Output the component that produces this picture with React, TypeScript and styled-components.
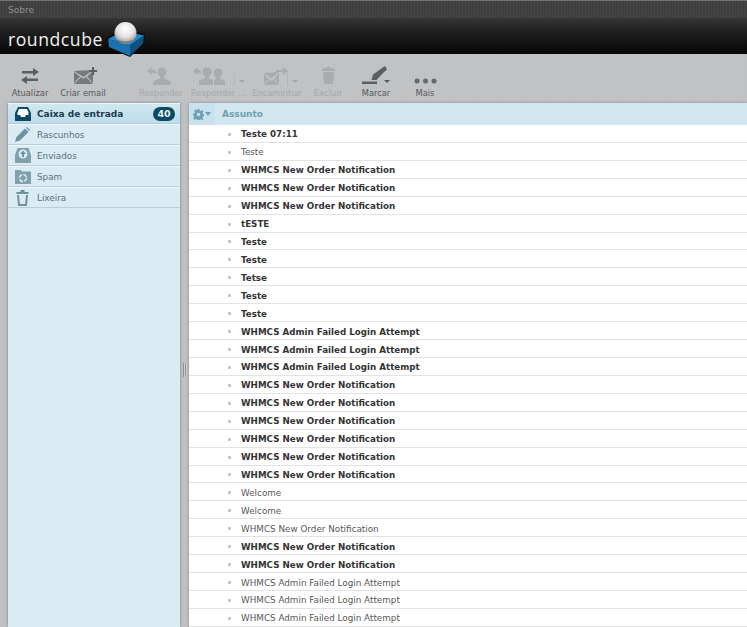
import React from 'react';
import styled, { createGlobalStyle } from 'styled-components';

const GlobalStyle = createGlobalStyle`
  html, body {
    margin: 0;
    padding: 0;
    height: 100%;
    overflow: hidden;
    background: #bfc1c3;
    font-family: "DejaVu Sans", Verdana, sans-serif;
  }
  #root { height: 100%; }
`;

const Page = styled.div`
  width: 747px;
  height: 627px;
  display: flex;
  flex-direction: column;
  overflow: hidden;
`;

const TopLine = styled.div`
  height: 18px;
  flex-shrink: 0;
  padding: 1px 0 0 8px;
  display: flex;
  align-items: center;
  font-size: 9px;
  color: #8f8f8f;
  background-color: #3f3f3f;
  background-image: repeating-linear-gradient(90deg, rgba(255, 255, 255, 0.03) 0 1px, transparent 1px 3px);
  border-top: 1px solid #6f7276;
  box-sizing: border-box;
`;

const Header = styled.div`
  height: 36px;
  flex-shrink: 0;
  display: flex;
  align-items: center;
  padding-left: 8px;
  position: relative;
  z-index: 1;
  background: linear-gradient(180deg, #353535 0%, #1c1c1c 45%, #060606 100%);
`;

const LogoText = styled.span`
  font-family: "Open Sans", "Lato", sans-serif;
  font-size: 17.6px;
  font-weight: 400;
  color: #f0f0f0;
  letter-spacing: 0.55px;
  width: 98px;
  margin-top: 5px;
`;

const Toolbar = styled.div`
  height: 49px;
  flex-shrink: 0;
  display: flex;
  align-items: flex-start;
  background-color: #bfc1c3;
  background-image: repeating-linear-gradient(90deg, rgba(255, 255, 255, 0.05) 0 1px, transparent 1px 3px);
`;

const ToolButton = styled.div<{ $w: number; $off?: boolean }>`
  width: ${p => p.$w}px;
  flex-shrink: 0;
  height: 44px;
  display: flex;
  flex-direction: column;
  align-items: center;
  position: relative;
  color: ${p => (p.$off ? '#a6a8aa' : '#56595b')};
  font-size: 8.3px;
  white-space: nowrap;
`;

const ToolIcon = styled.div<{ $shift?: number }>`
  height: 24px;
  margin-top: 11px;
  display: flex;
  align-items: center;
  justify-content: center;
  transform: translateX(${p => p.$shift ?? 0}px);
`;

const ToolLabel = styled.div`
  margin-top: 2px;
  line-height: 10px;
`;

const DropCaret = styled.div<{ $right: number; $line?: boolean }>`
  position: absolute;
  right: ${p => p.$right}px;
  top: 26px;
  width: 0;
  height: 0;
  border-left: 3px solid transparent;
  border-right: 3px solid transparent;
  border-top: 3px solid ${p => (p.$line ? '#a3a5a7' : '#55585a')};

  &::before {
    content: ${p => (p.$line ? '""' : 'none')};
    position: absolute;
    left: -8px;
    top: -10px;
    width: 1px;
    height: 13px;
    background: #b3b5b7;
  }
`;

const Spacer = styled.div<{ $w: number }>`
  width: ${p => p.$w}px;
  flex-shrink: 0;
`;

const Main = styled.div`
  flex: 1;
  min-height: 0;
  display: flex;
  padding-left: 8px;
`;

const Sidebar = styled.div`
  width: 172px;
  flex-shrink: 0;
  background: #d9ebf3;
  border-radius: 3px 3px 0 0;
  box-shadow: 0 0 3px rgba(60, 60, 60, 0.55);
`;

const Folder = styled.div<{ $active?: boolean }>`
  height: 19px;
  display: flex;
  align-items: center;
  border-bottom: 1px solid #bccdd6;
  border-top: 1px solid #eef7fb;
  padding-left: 6px;
  gap: 6px;
  font-size: ${p => (p.$active ? '9px' : '8.8px')};
  color: ${p => (p.$active ? '#1c3a4a' : '#5b6f79')};
  font-weight: ${p => (p.$active ? 700 : 400)};
  background: ${p => (p.$active ? 'linear-gradient(180deg, #d2e7f1, #bcdcea)' : 'transparent')};
`;

const FolderIcon = styled.div`
  width: 17px;
  height: 18px;
  display: flex;
  align-items: center;
  justify-content: center;
  flex-shrink: 0;
`;

const Badge = styled.span`
  margin-left: auto;
  margin-right: 5px;
  height: 14px;
  width: 22px;
  border-radius: 7px;
  background: #0a4a63;
  color: #e6f1f5;
  font-size: 9.5px;
  font-weight: 700;
  display: flex;
  align-items: center;
  justify-content: center;
`;

const Splitter = styled.div`
  width: 9px;
  flex-shrink: 0;
  display: flex;
  align-items: center;
  justify-content: center;
  gap: 1px;
  padding-top: 10px;
`;

const Grip = styled.div`
  width: 1px;
  height: 14px;
  background: #8e9092;
  box-shadow: 1px 0 0 #d2d3d4;
`;

const ListPanel = styled.div`
  flex: 1;
  min-width: 0;
  display: flex;
  flex-direction: column;
  background: #fff;
  border-radius: 3px 0 0 0;
  box-shadow: 0 0 3px rgba(60, 60, 60, 0.45);
`;

const ListHead = styled.div`
  height: 22px;
  flex-shrink: 0;
  display: flex;
  align-items: center;
  background: #d3e7f0;
  font-size: 9px;
  font-weight: 700;
  color: #6d9fb2;
`;

const GearCell = styled.div`
  width: 26px;
  height: 100%;
  display: flex;
  align-items: center;
  justify-content: center;
  gap: 1px;
  background: #c9e1ec;
  margin-right: 7px;
`;

const Row = styled.div<{ $unread: boolean }>`
  height: 14.93px;
  box-sizing: content-box;
  flex-shrink: 0;
  display: flex;
  align-items: center;
  border-bottom: 1px solid #e3e3e3;
  padding: 2px 0 0 39px;
  font-size: ${p => (p.$unread ? '8.72px' : '8.8px')};
  color: ${p => (p.$unread ? '#333' : '#585858')};
  font-weight: ${p => (p.$unread ? 700 : 400)};
  white-space: nowrap;
`;

const Dot = styled.span`
  width: 3px;
  height: 3px;
  background: #c4c4c4;
  border-radius: 1px;
  margin-right: 10px;
  flex-shrink: 0;
`;

const LogoMark = styled.svg`
  margin-top: 6px;
  flex-shrink: 0;
`;

const CubeLogo = () => (
  <LogoMark width="40" height="37" viewBox="0 0 40 37">
    <defs>
      <radialGradient id="ball" cx="0.5" cy="0.3" r="0.7">
        <stop offset="0" stopColor="#ffffff" />
        <stop offset="0.55" stopColor="#e4e4e4" />
        <stop offset="1" stopColor="#8c8c8c" />
      </radialGradient>
    </defs>
    <path d="M0 17L17 8 39 13 38 23 24 36 2 27z" fill="#0c0c0c" />
    <path d="M2 18L24 24 24 35 3 26z" fill="#1b72ae" />
    <path d="M24 24L38 14.500 37 22.500 24 35z" fill="#0e5283" />
    <path d="M2 18L17 10 38 14.500 24 24z" fill="#2288cb" />
    <circle cx="19.500" cy="12" r="11" fill="url(#ball)" />
    <path d="M9 16c3 6 18 6 21 0-1 8-20 8-21 0z" fill="#777" />
  </LogoMark>
);

const RefreshIcon = () => (
  <svg width="18" height="16" viewBox="0 0 18 16" fill="#5c5f61">
    <path d="M1 3h11V0l6 4-6 4V5.500H1z" />
    <path d="M17 10.500H6V8l-6 4 6 4v-3h11z" />
  </svg>
);

const ComposeIcon = () => (
  <svg width="24" height="18" viewBox="0 0 24 18">
    <g fill="#76797b">
      <path d="M0 4l19-1-9.500 7z" />
      <path d="M0 5v11l6-6.500zM19 4v12l-6-6.500z" />
      <path d="M0 17l7-7 2.500 1.800L12 10l7 7z" />
    </g>
    <path d="M18 0h2v3h3v2h-3v3h-2V5h-3V3h3z" fill="#5c5f61" />
  </svg>
);

const ReplyIcon = ({ c }: { c: string }) => (
  <svg width="24" height="18" viewBox="0 0 24 18" fill={c}>
    <path d="M0 4l4.500-4v2.500c3 0 5 2 5 5-1.500-1.500-3-2-5-2V8z" />
    <circle cx="15" cy="5" r="4.500" />
    <path d="M13 9h4v2l7 4v3H6v-3l7-4z" />
  </svg>
);

const ReplyAllIcon = ({ c }: { c: string }) => (
  <svg width="32" height="18" viewBox="0 0 32 18" fill={c}>
    <path d="M0 4l4.500-4v2.500c2 0 4 2 4 4.500-1-1-2.500-1.500-4-1.500V8z" />
    <circle cx="14" cy="5" r="4.500" />
    <path d="M12 9h4v2l4 2.500V18H6v-4.500l6-2.500z" />
    <circle cx="25" cy="6" r="4.500" />
    <path d="M23 10h4v1.500l5 2.500v4H21v-5l2-1z" />
  </svg>
);

const ForwardIcon = ({ c }: { c: string }) => (
  <svg width="24" height="18" viewBox="0 0 24 18" fill={c}>
    <path d="M0 6l15-1-7.500 6z" />
    <path d="M0 7v10l5-5zM15 6v11l-5-5z" />
    <path d="M0 18l5.500-5.500 2 1.500 2-1.500L15 18z" />
    <path d="M12 3h7V0l5 4-5 4V5h-7z" />
  </svg>
);

const TrashIcon = ({ c }: { c: string }) => (
  <svg width="13" height="17" viewBox="0 0 13 17" fill={c}>
    <path d="M4.500 0h4v1.500H13V4H0V1.500h4.500z" />
    <path d="M1 5h11l-1 12H2z" />
  </svg>
);

const MarkerIcon = () => (
  <svg width="26" height="19" viewBox="0 0 26 19" fill="#5c5f61">
    <path d="M9.500 14L11 8.500 20 2 23 0 25 3.500 21.500 6.500 14.500 14z" />
    <path d="M0 15.500h15V18H0z" />
  </svg>
);

const MoreIcon = () => (
  <svg width="23" height="6" viewBox="0 0 23 6" fill="#66696b" style={{ marginTop: 10 }}>
    <circle cx="3" cy="3" r="2.500" />
    <circle cx="11.500" cy="3" r="2.500" />
    <circle cx="20" cy="3" r="2.500" />
  </svg>
);

const InboxIcon = () => (
  <svg width="16" height="14" viewBox="0 0 16 14">
    <path d="M3 0h10l3 6v8H0V6z" fill="#0c4a66" />
    <path d="M4 2h8l1.500 3.500v2.500H11l-1 2H6L5 8H2.500V5.500z" fill="#fff" />
  </svg>
);

const PencilIcon = () => (
  <svg width="15" height="15" viewBox="0 0 15 15" fill="#6f929f">
    <path d="M0 15l1.500-5L10 1.500 13.500 5 5 13.500z" />
    <path d="M11 .8l1-.8 3 3-.8 1z" />
  </svg>
);

const SentIcon = () => (
  <svg width="16" height="15" viewBox="0 0 16 15">
    <path d="M2.500 0h11L16 7v8H0V7z" fill="#7fa0ac" />
    <circle cx="8" cy="6" r="4.500" fill="#d9ebf3" />
    <path d="M8 2.500L11 6H9v3H7V6H5z" fill="#6f929f" />
  </svg>
);

const SpamIcon = () => (
  <svg width="16" height="14" viewBox="0 0 16 14">
    <path d="M0 0h6l1 1.500h9V14H0z" fill="#7fa0ac" />
    <circle cx="8" cy="8" r="3.500" fill="none" stroke="#e4f1f6" strokeWidth="1.500" strokeDasharray="4 1.500" />
  </svg>
);

const BinOutline = () => (
  <svg width="13" height="16" viewBox="0 0 13 16" fill="none" stroke="#6f929f">
    <path d="M4.500 1h4M.5 3h12" strokeWidth="2" />
    <path d="M2 5l1 10h7l1-10" strokeWidth="2" />
  </svg>
);

const GearIcon = () => (
  <svg width="11" height="11" viewBox="0 0 24 24" fill="#6d9fb2">
    <path d="M10 0h4l.6 3.500 2.500 1 3-2 2.800 2.900-2 2.900 1 2.500 3.100.7v4l-3.500.6-1 2.500 2 3-2.900 2.800-2.900-2-2.500 1-.7 3.100h-4l-.6-3.500-2.500-1-3 2L.5 20l2-2.900-1-2.500L0 14v-4l3.500-.6 1-2.500-2-3L5.400 1l2.900 2 1.100-.5zM12 8a4 4 0 100 8 4 4 0 000-8z" fillRule="evenodd" />
  </svg>
);

const Caret = ({ color }: { color: string }) => (
  <svg width="6" height="4" viewBox="0 0 6 4"><path d="M0 0h6L3 4z" fill={color} /></svg>
);

const folders = [
  { name: 'Rascunhos', icon: <PencilIcon /> },
  { name: 'Enviados', icon: <SentIcon /> },
  { name: 'Spam', icon: <SpamIcon /> },
  { name: 'Lixeira', icon: <BinOutline /> },
];

const N = 'WHMCS New Order Notification';
const A = 'WHMCS Admin Failed Login Attempt';

const messages: [string, boolean][] = [
  ['Teste 07:11', true],
  ['Teste', false],
  [N, true],
  [N, true],
  [N, true],
  ['tESTE', true],
  ['Teste', true],
  ['Teste', true],
  ['Tetse', true],
  ['Teste', true],
  ['Teste', true],
  [A, true],
  [A, true],
  [A, true],
  [N, true],
  [N, true],
  [N, true],
  [N, true],
  [N, true],
  [N, true],
  ['Welcome', false],
  ['Welcome', false],
  [N, false],
  [N, true],
  [N, true],
  [A, false],
  [A, false],
  [A, false],
];

const OFF = '#a9abad';

export default function App() {
  return (
    <Page>
      <GlobalStyle />
      <TopLine>Sobre</TopLine>
      <Header>
        <LogoText>roundcube</LogoText>
        <CubeLogo />
      </Header>
      <Toolbar>
        <Spacer $w={8} />
        <ToolButton $w={44}>
          <ToolIcon><RefreshIcon /></ToolIcon>
          <ToolLabel>Atualizar</ToolLabel>
        </ToolButton>
        <Spacer $w={5} />
        <ToolButton $w={52}>
          <ToolIcon $shift={3}><ComposeIcon /></ToolIcon>
          <ToolLabel>Criar email</ToolLabel>
        </ToolButton>
        <Spacer $w={27} />
        <ToolButton $w={50} $off>
          <ToolIcon $shift={-2}><ReplyIcon c={OFF} /></ToolIcon>
          <ToolLabel>Responder</ToolLabel>
        </ToolButton>
        <Spacer $w={5} />
        <ToolButton $w={55} $off>
          <ToolIcon $shift={-10}><ReplyAllIcon c={OFF} /></ToolIcon>
          <ToolLabel>Responder ...</ToolLabel>
          <DropCaret $right={1} $line />
        </ToolButton>
        <Spacer $w={5} />
        <ToolButton $w={52} $off>
          <ToolIcon $shift={-1}><ForwardIcon c={OFF} /></ToolIcon>
          <ToolLabel>Encaminhar</ToolLabel>
          <DropCaret $right={5} $line />
        </ToolButton>
        <Spacer $w={10} />
        <ToolButton $w={30} $off>
          <ToolIcon><TrashIcon c={OFF} /></ToolIcon>
          <ToolLabel>Excluir</ToolLabel>
        </ToolButton>
        <Spacer $w={17} />
        <ToolButton $w={32}>
          <ToolIcon $shift={-1}><MarkerIcon /></ToolIcon>
          <ToolLabel>Marcar</ToolLabel>
          <DropCaret $right={2} />
        </ToolButton>
        <Spacer $w={17} />
        <ToolButton $w={32}>
          <ToolIcon><MoreIcon /></ToolIcon>
          <ToolLabel>Mais</ToolLabel>
        </ToolButton>
      </Toolbar>
      <Main>
        <Sidebar>
          <Folder $active>
            <FolderIcon><InboxIcon /></FolderIcon>
            Caixa de entrada
            <Badge>40</Badge>
          </Folder>
          {folders.map(f => (
            <Folder key={f.name}>
              <FolderIcon>{f.icon}</FolderIcon>
              {f.name}
            </Folder>
          ))}
        </Sidebar>
        <Splitter><Grip /><Grip /></Splitter>
        <ListPanel>
          <ListHead>
            <GearCell><GearIcon /><Caret color="#6d9fb2" /></GearCell>
            Assunto
          </ListHead>
          {messages.map((m, i) => (
            <Row key={i} $unread={m[1]}><Dot />{m[0]}</Row>
          ))}
        </ListPanel>
      </Main>
    </Page>
  );
}
